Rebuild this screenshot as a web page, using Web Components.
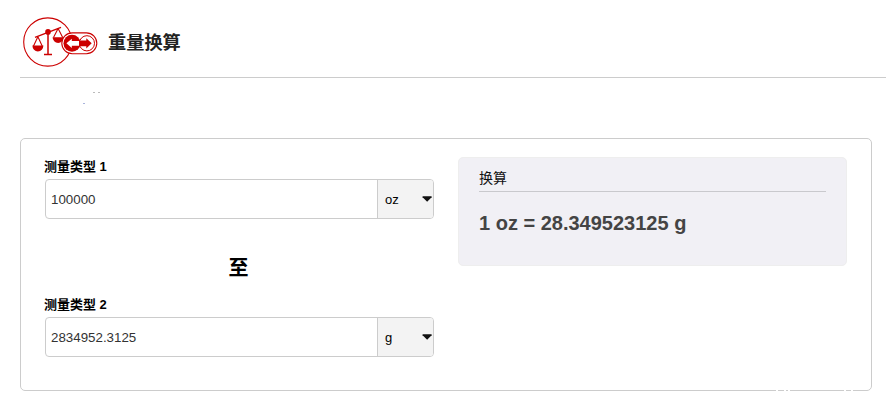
<!DOCTYPE html>
<html lang="zh">
<head>
<meta charset="utf-8">
<title>重量换算</title>
<style>
  body {
    margin: 0;
    background: #fff;
    color: #000;
    font-family: "Liberation Sans", "Noto Sans CJK SC", sans-serif;
    overflow: hidden;
  }
</style>
</head>
<body>
<weight-converter></weight-converter>

<script>
class ScaleIcon extends HTMLElement {
  connectedCallback() {
    this.attachShadow({ mode: 'open' });
    this.shadowRoot.innerHTML = `
      <style>
        :host { display: block; width: 78px; height: 52px; }
        svg { display: block; }
      </style>
      <svg width="78" height="52" viewBox="0 0 78 52" fill="none" stroke="#c00">
        <circle cx="25.8" cy="26" r="24.1" stroke-width="1.1"/>
        <!-- beam, post and foot -->
        <path d="M13 21.4 39 11.3" stroke-width="1.4"/>
        <path d="M26 17V38.6M22 38.6h8" stroke-width="1.5"/>
        <circle cx="26" cy="15.9" r="2.8" fill="#c00" stroke="none"/>
        <!-- pans -->
        <path d="M15.9 20.8 11.4 30.2M15.9 20.8l4.4 9.4M36.1 12.4l-4.6 9.2M36.1 12.4l4.6 9.2" stroke-width="1.1"/>
        <path d="M10.4 29.6h11a5.5 5.8 0 0 1-11 0zM30.6 21.2h11a5.5 5.8 0 0 1-11 0z" fill="#c00" stroke="none"/>
        <!-- swap badge -->
        <rect x="39.8" y="16.9" width="35" height="20.8" rx="10.4" fill="#fff" stroke-width="1.1"/>
        <circle cx="50" cy="27.3" r="8.5" fill="#c00" stroke="none"/>
        <circle cx="64.9" cy="27.3" r="7.6" fill="#fff" stroke-width="1"/>
        <path d="M44.4 27.3l5.4-4.6v2.2h7.4v4.8h-7.4v2.2z" fill="#fff" stroke="none"/>
        <path d="M57 24.4h7.3v-2.2l5.4 5.1-5.4 5.1v-2.2H57z" fill="#c00" stroke="none"/>
      </svg>
    `;
  }
}

class PageHeading extends HTMLElement {
  connectedCallback() {
    this.attachShadow({ mode: 'open' });
    this.shadowRoot.innerHTML = `
      <style>
        :host {
          display: flex;
          align-items: flex-start;
          box-sizing: border-box;
          height: 78px;
          padding: 16px 0 0 2px;
          border-bottom: 1px solid #ccc;
        }
        h1 {
          margin: 0 0 0 8px;
          font-size: 18.2px;
          line-height: 26px;
          padding-top: 14px;
          color: #222;
        }
      </style>
      <scale-icon></scale-icon>
      <h1><slot></slot></h1>
    `;
  }
}

class UnitField extends HTMLElement {
  connectedCallback() {
    this.attachShadow({ mode: 'open' });
    this.shadowRoot.innerHTML = `
      <style>
        :host { display: block; width: 389px; }
        .label {
          font-size: 13px;
          font-weight: bold;
          line-height: 20px;
          height: 20px;
          margin: 0 0 2px -1px;
        }
        .row {
          display: flex;
          box-sizing: border-box;
          height: 40px;
          border: 1px solid #ccc;
          border-radius: 4px;
          overflow: hidden;
          font-size: 13.333px;
          line-height: 39px;
        }
        .value {
          flex: 1;
          padding-left: 5px;
          color: #333;
        }
        .unit {
          display: flex;
          align-items: center;
          justify-content: space-between;
          box-sizing: border-box;
          width: 56px;
          padding: 0 1px 0 7px;
          border-left: 1px solid #ccc;
          background: #f3f3f3;
          font-size: 13px;
        }
      </style>
      <div class="label"><slot></slot></div>
      <div class="row">
        <div class="value">${this.getAttribute('value')}</div>
        <div class="unit">
          <span>${this.getAttribute('unit')}</span>
          <svg width="10" height="6" viewBox="0 0 10 6"><path d="M.6 .2h9v1L5.1 5.8.6 1.2z" fill="#111"/></svg>
        </div>
      </div>
    `;
  }
}

class ResultPanel extends HTMLElement {
  connectedCallback() {
    this.attachShadow({ mode: 'open' });
    this.shadowRoot.innerHTML = `
      <style>
        :host {
          display: block;
          box-sizing: border-box;
          width: 389px;
          height: 109px;
          padding: 10px 20px;
          border: 1px solid #eee;
          border-radius: 5px;
          background: #f1f0f5;
        }
        .title {
          height: 23px;
          border-bottom: 1px solid #c9c9cd;
          font-size: 14px;
          line-height: 20px;
          color: #111;
        }
        .result {
          margin-top: 19px;
          font-size: 20px;
          font-weight: bold;
          line-height: 24px;
          color: #444;
        }
      </style>
      <div class="title">${this.getAttribute('heading')}</div>
      <div class="result"><slot></slot></div>
    `;
  }
}

class WeightConverter extends HTMLElement {
  connectedCallback() {
    this.attachShadow({ mode: 'open' });
    this.shadowRoot.innerHTML = `
      <style>
        :host { display: block; padding-left: 20px; }
        .specks { display: block; margin-bottom: 30px; }
        .card {
          position: relative;
          display: flex;
          gap: 24px;
          box-sizing: border-box;
          width: 852px;
          height: 253px;
          padding: 18px 24px 0;
          border: 1px solid #ccc;
          border-radius: 5px;
        }
        .to {
          height: 28px;
          margin: 35px 2px 13px 0;
          font-size: 20px;
          font-weight: bold;
          line-height: 28px;
          text-align: center;
        }
        /* small breaks in the bottom border */
        .breaks {
          position: absolute;
          right: 17px;
          bottom: -1px;
        }
      </style>
      <page-heading>重量换算</page-heading>
      <svg class="specks" width="100" height="30">
        <path d="M73 14.5h2M78 14.5h2" stroke="#bbb"/>
        <path d="M63 25.5h2" stroke="#a9b4dc"/>
      </svg>
      <div class="card">
        <div>
          <unit-field value="100000" unit="oz">测量类型 1</unit-field>
          <div class="to">至</div>
          <unit-field value="2834952.3125" unit="g">测量类型 2</unit-field>
        </div>
        <result-panel heading="换算">1 oz = 28.349523125 g</result-panel>
        <svg class="breaks" width="78" height="1">
          <path d="M0 .5h2M8 .5h2M12 .5h2M68 .5h2M75 .5h2" stroke="#fff"/>
        </svg>
      </div>
    `;
  }
}

customElements.define('scale-icon', ScaleIcon);
customElements.define('page-heading', PageHeading);
customElements.define('unit-field', UnitField);
customElements.define('result-panel', ResultPanel);
customElements.define('weight-converter', WeightConverter);
</script>
</body>
</html>
